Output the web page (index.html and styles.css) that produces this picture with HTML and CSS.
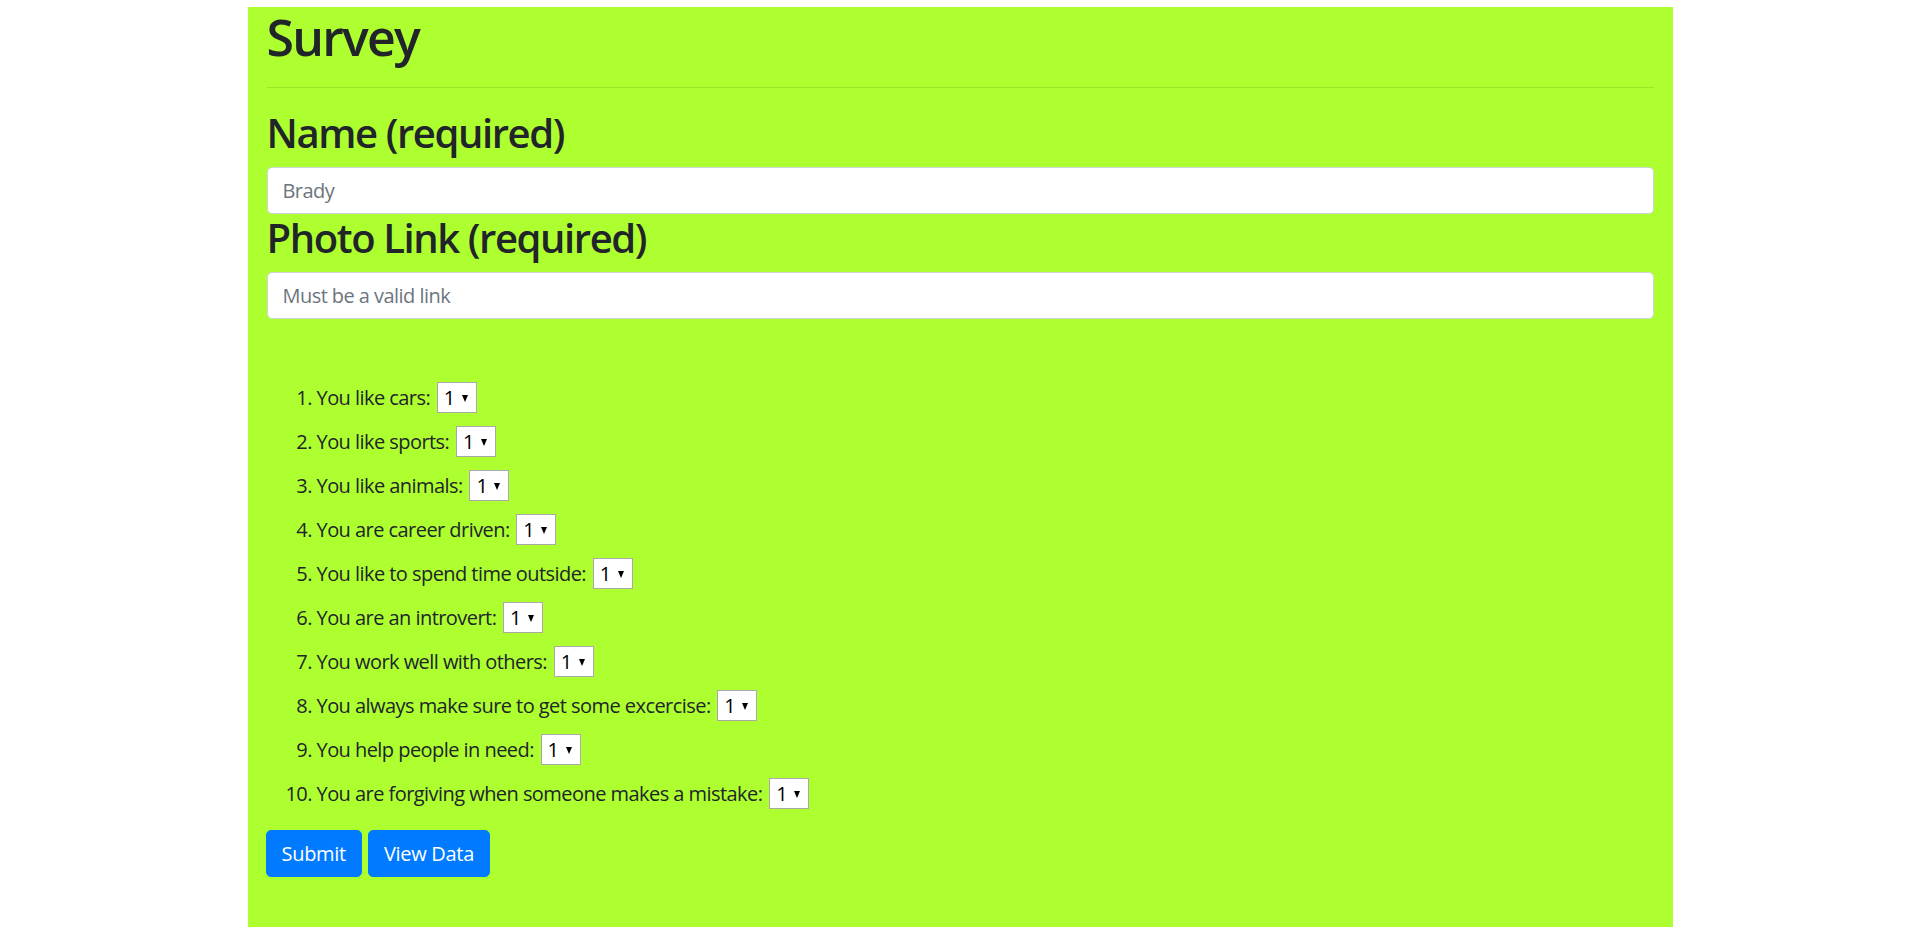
FILE: index.html
```html
<!DOCTYPE html>
<html lang="en">
<head>
<meta charset="utf-8">
<title>Survey</title>
<link rel="stylesheet" href="styles.css">
</head>
<body>
<div class="container">
  <h1 class="title">Survey</h1>
  <hr class="divider">
  <form class="survey-form">
    <h2 class="field-label">Name (required)</h2>
    <input class="form-control" type="text" placeholder="Brady">
    <h2 class="field-label">Photo Link (required)</h2>
    <input class="form-control" type="text" placeholder="Must be a valid link">
    <ol class="questions">
      <li><span class="q-text">You like cars:</span> <span class="select-wrap"><select class="q-select"><option>1</option><option>2</option><option>3</option><option>4</option><option>5</option></select></span></li>
      <li><span class="q-text">You like sports:</span> <span class="select-wrap"><select class="q-select"><option>1</option><option>2</option><option>3</option><option>4</option><option>5</option></select></span></li>
      <li><span class="q-text">You like animals:</span> <span class="select-wrap"><select class="q-select"><option>1</option><option>2</option><option>3</option><option>4</option><option>5</option></select></span></li>
      <li><span class="q-text">You are career driven:</span> <span class="select-wrap"><select class="q-select"><option>1</option><option>2</option><option>3</option><option>4</option><option>5</option></select></span></li>
      <li><span class="q-text">You like to spend time outside:</span> <span class="select-wrap"><select class="q-select"><option>1</option><option>2</option><option>3</option><option>4</option><option>5</option></select></span></li>
      <li><span class="q-text">You are an introvert:</span> <span class="select-wrap"><select class="q-select"><option>1</option><option>2</option><option>3</option><option>4</option><option>5</option></select></span></li>
      <li><span class="q-text">You work well with others:</span> <span class="select-wrap"><select class="q-select"><option>1</option><option>2</option><option>3</option><option>4</option><option>5</option></select></span></li>
      <li><span class="q-text">You always make sure to get some excercise:</span> <span class="select-wrap"><select class="q-select"><option>1</option><option>2</option><option>3</option><option>4</option><option>5</option></select></span></li>
      <li><span class="q-text">You help people in need:</span> <span class="select-wrap"><select class="q-select"><option>1</option><option>2</option><option>3</option><option>4</option><option>5</option></select></span></li>
      <li><span class="q-text">You are forgiving when someone makes a mistake:</span> <span class="select-wrap"><select class="q-select"><option>1</option><option>2</option><option>3</option><option>4</option><option>5</option></select></span></li>
    </ol>
    <div class="actions">
      <button type="button" class="btn">Submit</button>
      <button type="button" class="btn">View Data</button>
    </div>
  </form>
</div>
</body>
</html>
```
FILE: styles.css
```css
html, body {
  margin: 0;
  padding: 0;
  background: #ffffff;
}
body {
  font-family: "Segoe UI", "Open Sans", "Noto Sans", Arial, sans-serif;
  font-size: 20px;
  line-height: 30px;
  letter-spacing: -0.55px;
  color: #212529;
}
.container {
  width: 1425px;
  box-sizing: border-box;
  margin: 7px auto 0;
  padding: 0 19px 50px;
  background: #adff2f;
}
.title {
  margin: 0 0 10px;
  font-size: 50px;
  line-height: 60px;
  font-weight: 600;
  letter-spacing: -0.035em;
}
.divider {
  margin: 20px 0 21px;
  border: 0;
  border-top: 1px solid rgba(0, 0, 0, 0.1);
  height: 0;
}
.survey-form {
  margin: 0;
}
.field-label {
  margin: 0 0 10px;
  font-size: 40px;
  line-height: 48px;
  font-weight: 600;
  letter-spacing: -0.035em;
}
.form-control {
  display: block;
  width: 100%;
  box-sizing: border-box;
  height: 47px;
  padding: 7px 15px;
  font-family: inherit;
  font-size: 20px;
  line-height: 30px;
  letter-spacing: -0.55px;
  color: #495057;
  background: #ffffff;
  border: 1px solid #ced4da;
  border-radius: 5px;
  margin: 0;
}
.form-control::placeholder {
  color: #6c757d;
  opacity: 1;
}
.questions {
  margin: 63px 0 0;
  padding-left: 50px;
}
.questions li {
  line-height: 30px;
  margin-bottom: 13px;
}
.questions li:last-child {
  margin-bottom: 0;
}
.select-wrap {
  position: relative;
  display: inline-block;
  vertical-align: baseline;
  margin-left: 2px;
}
.select-wrap::after {
  content: "";
  position: absolute;
  right: 9px;
  top: 13px;
  border-left: 3px solid transparent;
  border-right: 3px solid transparent;
  border-top: 7px solid #000;
  pointer-events: none;
}
.q-select {
  -webkit-appearance: none;
  appearance: none;
  box-sizing: border-box;
  width: 40px;
  height: 31px;
  margin: 0;
  padding: 0 0 0 6px;
  font-family: inherit;
  font-size: 20px;
  line-height: 29px;
  color: #000;
  background: #ffffff;
  border: 1px solid #a9a9a9;
  border-radius: 0;
}
.actions {
  margin: 21px 0 0 -1px;
  display: flex;
  gap: 6px;
}
.btn {
  box-sizing: border-box;
  height: 47px;
  padding: 7px 15px;
  font-family: inherit;
  font-size: 20px;
  line-height: 30px;
  letter-spacing: -0.3px;
  color: #ffffff;
  background: #007bff;
  border: 1px solid #007bff;
  border-radius: 5px;
  cursor: pointer;
}
```
